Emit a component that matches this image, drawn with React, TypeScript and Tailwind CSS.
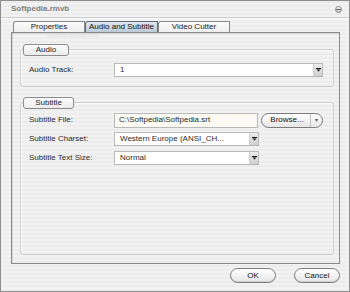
import React from "react";

const Arrow = () => (
  <svg width="5" height="4" viewBox="0 0 5 4">
    <rect x="0" y="0" width="5" height="1" fill="#111" />
    <path d="M0.5 1.5 H4.5 L2.5 3.5 Z" fill="#111" />
  </svg>
);

const Select = ({ value, w }: { value: string; w: string }) => (
  <div className={`${w} h-[14px] flex bg-white border border-[#b9b9b9]`}>
    <div className="flex-1 flex items-center pl-[5px] overflow-hidden whitespace-nowrap">{value}</div>
    <div className="w-[9px] flex items-center justify-center bg-[linear-gradient(#ececec,#cfcfcf)] border-l border-[#d0d0d0]">
      <Arrow />
    </div>
  </div>
);

const Row = ({ label, children }: { label: string; children: React.ReactNode }) => (
  <div className="flex items-center h-[14px]">
    <div className="w-[85px] whitespace-nowrap">{label}</div>
    {children}
  </div>
);

const GroupLabel = ({ text, w }: { text: string; w: string }) => (
  <div
    className={`absolute left-[2px] top-[-6px] ${w} h-[12px] flex items-center justify-center rounded-[3px] border border-[#8c8c8c] bg-[linear-gradient(#fbfbfb,#ececec)] text-[#222]`}
  >
    {text}
  </div>
);

const Tab = ({ text, sel }: { text: string; sel?: boolean }) => (
  <div
    className={`h-[11px] flex items-center justify-center border border-b-0 rounded-tl-[3px] whitespace-nowrap ${
      sel
        ? "w-[73px] bg-[linear-gradient(#dfe6ee,#bccad8)] border-[#5d6b7a] text-[#111]"
        : "w-[72px] bg-[linear-gradient(#fafafa,#efefef)] border-[#8a8a8a] text-[#222]"
    }`}
  >
    {text}
  </div>
);

const PillButton = ({ text }: { text: string }) => (
  <div className="w-[46px] h-[15px] flex items-center justify-center rounded-full border border-[#7c7c7c] bg-[linear-gradient(#ffffff,#e6e6e6)] shadow-[inset_0_-1px_0_#cfcfcf] text-[#111]">
    {text}
  </div>
);

export default function App() {
  return (
    <div
      className="w-[350px] h-[292px] flex flex-col border border-[#8e8e8e] text-[8px] leading-none text-[#2b2b2b] bg-[repeating-linear-gradient(0deg,#ececec_0px,#ececec_2px,#f2f2f2_2px,#f2f2f2_4px)] font-['Liberation_Sans',Arial,sans-serif] overflow-hidden"
    >
      {/* title bar */}
      <div className="h-[17px] shrink-0 flex items-center justify-between pl-[10px] pr-[7px] border-b border-[#cbcbcb] shadow-[0_1px_0_#fafafa]">
        <span className="font-bold text-[#808080] text-[8px]">Softpedia.rmvb</span>
        <div className="w-[7px] h-[7px] rounded-full border border-[#8a8a8a] bg-[linear-gradient(#f4f4f4,#bdbdbd)] flex items-center justify-center mt-[1px]">
          <div className="w-[5px] h-[1px] bg-[#777]" />
        </div>
      </div>

      <div className="pl-[10px] pt-[3px] relative">
        <div className="absolute left-[46px] top-[14px] text-[6px] text-[#e2e2e2] whitespace-nowrap">www.softpedia.com</div>
        {/* tabs */}
        <div className="flex ml-[2px]">
          <Tab text="Properties" />
          <Tab text="Audio and Subtitle" sel />
          <Tab text="Video Cutter" />
        </div>
        {/* panel */}
        <div className="w-[329px] h-[232px] border border-[#8a8a8a] shadow-[inset_1px_1px_0_#d6d6d6] pt-[16px] pl-[8px] pr-[5px]">
          {/* audio group */}
          <div className="relative h-[38px] border border-[#d0d0d0] rounded-[3px] shadow-[inset_1px_1px_0_#fafafa] pt-[13px] pl-[8px]">
            <GroupLabel text="Audio" w="w-[46px]" />
            <Row label="Audio Track:">
              <Select value="1" w="w-[209px]" />
            </Row>
          </div>
          {/* subtitle group */}
          <div className="relative mt-[15px] h-[153px] border border-[#d0d0d0] rounded-[3px] shadow-[inset_1px_1px_0_#fafafa] pt-[10px] pl-[8px] flex flex-col gap-[5px]">
            <GroupLabel text="Subtitle" w="w-[51px]" />
            <Row label="Subtitle File:">
              <div className="w-[144px] h-[15px] flex items-center pl-[4px] bg-[#fafaf2] border border-[#b9b9b9] whitespace-nowrap">
                C:\Softpedia\Softpedia.srt
              </div>
              <div className="ml-[3px] w-[62px] h-[15px] flex items-center rounded-full border border-[#7c7c7c] bg-[linear-gradient(#ffffff,#e6e6e6)] text-[#111]">
                <div className="flex-1 text-center pl-[2px]">Browse...</div>
                <div className="w-[12px] h-full border-l border-[#c4c4c4] flex items-center justify-center text-[#555] text-[6px]">▾</div>
              </div>
            </Row>
            <Row label="Subtitle Charset:">
              <Select value="Western Europe (ANSI_CH..." w="w-[145px]" />
            </Row>
            <Row label="Subtitle Text Size:">
              <Select value="Normal" w="w-[145px]" />
            </Row>
          </div>
        </div>
      </div>

      {/* buttons */}
      <div className="flex justify-end gap-[18px] mt-[4px] pr-[9px]">
        <PillButton text="OK" />
        <PillButton text="Cancel" />
      </div>
    </div>
  );
}
